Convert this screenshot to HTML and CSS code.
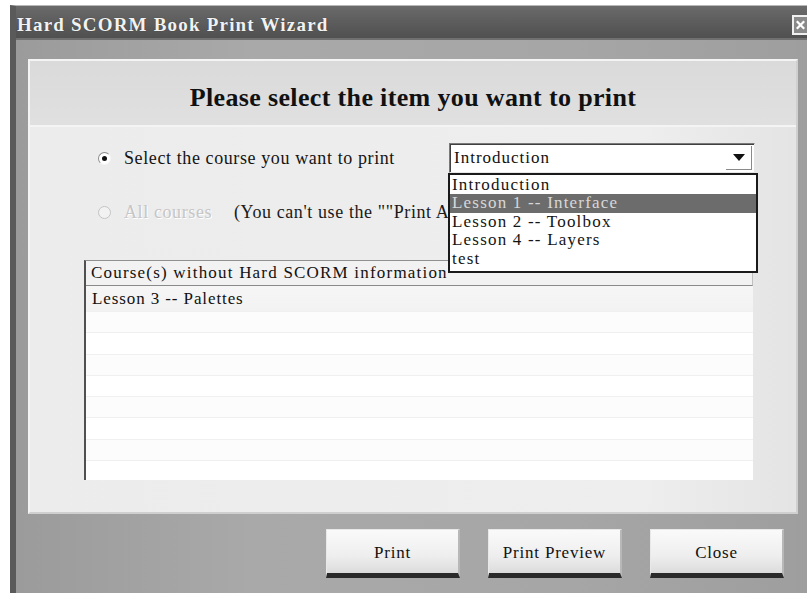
FILE: index.html
```html
<!DOCTYPE html>
<html lang="en">
<head>
<meta charset="utf-8">
<title>Hard SCORM Book Print Wizard</title>
<link rel="stylesheet" href="styles.css">
</head>
<body>
<div class="window">
  <div class="titlebar">
    <span class="title">Hard SCORM Book Print Wizard</span>
    <span class="close-btn">
      <svg width="14" height="14" viewBox="0 0 14 14"><path d="M3 3 L11 11 M11 3 L3 11" stroke="#fff" stroke-width="2.4"/></svg>
    </span>
  </div>
  <div class="client">
    <div class="panel">
      <div class="panel-head">Please select the item you want to print</div>
      <div class="panel-body">
        <div class="option-row first">
          <span class="radio checked"></span>
          <span class="opt-label">Select the course you want to print</span>
          <div class="combo">
            <span class="combo-text">Introduction</span>
            <span class="combo-btn">
              <svg width="12" height="7" viewBox="0 0 12 7"><path d="M0 0 H12 L6 7 Z" fill="#111"/></svg>
            </span>
            <ul class="dropdown">
              <li>Introduction</li>
              <li class="selected">Lesson 1 -- Interface</li>
              <li>Lesson 2 -- Toolbox</li>
              <li>Lesson 4 -- Layers</li>
              <li>test</li>
            </ul>
          </div>
        </div>
        <div class="option-row second">
          <span class="radio disabled"></span>
          <span class="opt-label muted">All courses</span>
          <span class="note">(You can't use the ""Print A</span>
        </div>
        <div class="listbox">
          <div class="list-head">Course(s) without Hard SCORM information</div>
          <div class="list-row filled">Lesson 3 -- Palettes</div>
          <div class="list-row"></div>
          <div class="list-row"></div>
          <div class="list-row"></div>
          <div class="list-row"></div>
          <div class="list-row"></div>
          <div class="list-row"></div>
          <div class="list-row"></div>
          <div class="list-row last"></div>
        </div>
      </div>
    </div>
    <div class="buttons">
      <button class="btn">Print</button>
      <button class="btn">Print Preview</button>
      <button class="btn">Close</button>
    </div>
  </div>
</div>
</body>
</html>
```
FILE: styles.css
```css
* { box-sizing: border-box; }

html, body {
  margin: 0;
  padding: 0;
  background: #ffffff;
  width: 807px;
  height: 593px;
  overflow: hidden;
  font-family: "Liberation Serif", "Times New Roman", serif;
}

.window {
  margin: 5px 0 0 10px;
  width: 797px;
  height: 588px;
  display: flex;
  flex-direction: column;
  background: #9a9a9a;
  border-left: 6px solid #5a5a5a;
  border-top: 1px solid #b8b8b8;
}

.titlebar {
  height: 34px;
  flex: 0 0 34px;
  display: flex;
  align-items: center;
  justify-content: space-between;
  background: linear-gradient(#6a6a6a, #5a5a5a 60%, #505050);
  border-bottom: 2px solid #707070;
  padding: 5px 0 0 1px;
}

.title {
  color: #f2f2f2;
  font-weight: bold;
  font-size: 19px;
  letter-spacing: 1.2px;
  text-shadow: 0 0 1px #333;
}

.close-btn {
  width: 15px;
  height: 20px;
  border: 2px solid #f0f0f0;
  border-right: none;
  background: #8a8a8a;
  display: flex;
  align-items: center;
  justify-content: center;
}

.client {
  flex: 1;
  display: flex;
  flex-direction: column;
  background: linear-gradient(90deg, #9b9b9b, #a9a9a9 30%, #a6a6a6 70%, #9e9e9e);
  padding: 19px 9px 0 12px;
}

.panel {
  height: 455px;
  flex: 0 0 455px;
  background: #e8e8e8;
  border: 2px solid #f4f4f4;
  border-right-color: #cfcfcf;
  border-bottom-color: #cfcfcf;
  display: flex;
  flex-direction: column;
}

.panel-head {
  height: 66px;
  flex: 0 0 66px;
  display: flex;
  align-items: center;
  justify-content: center;
  font-weight: bold;
  font-size: 26px;
  letter-spacing: 0.35px;
  color: #111;
  background: linear-gradient(#dadada, #e0e0e0);
  border-bottom: 2px solid #f4f4f4;
  padding-top: 10px;
}

.panel-body {
  flex: 1;
  position: relative;
  background: linear-gradient(90deg, #ececec, #eeeeee 80%, #e4e4e4);
  padding: 16px 0 0 56px;
}

.option-row {
  display: flex;
  align-items: center;
  height: 30px;
  font-size: 18px;
  letter-spacing: 0.6px;
  color: #141414;
}

.option-row.second {
  margin-top: 24px;
}

.radio {
  width: 13px;
  height: 13px;
  border-radius: 50%;
  background: #fff;
  border: 1px solid #8a8a8a;
  border-right-color: #f4f4f4;
  border-bottom-color: #f4f4f4;
  margin-left: 12px;
  margin-right: 13px;
  position: relative;
  flex: 0 0 13px;
}

.radio.checked::after {
  content: "";
  position: absolute;
  left: 3px;
  top: 3px;
  width: 5px;
  height: 5px;
  border-radius: 50%;
  background: #111;
}

.radio.disabled {
  background: #f2f2f2;
  border-color: #c4c4c4;
}

.opt-label {
  white-space: nowrap;
}

.option-row.first .opt-label {
  width: 325px;
  flex: 0 0 325px;
}

.opt-label.muted {
  color: #c6c6c6;
  text-shadow: 1px 1px 0 #ffffff;
  width: 110px;
  flex: 0 0 110px;
}

.note {
  white-space: nowrap;
  color: #1a1a1a;
}

.combo {
  position: relative;
  width: 306px;
  height: 30px;
  background: #fff;
  border: 1px solid #7a7a7a;
  border-right-color: #e6e6e6;
  border-bottom-color: #e6e6e6;
  box-shadow: inset 1px 1px 0 #404040;
  display: flex;
  align-items: center;
  justify-content: space-between;
  padding-left: 4px;
  margin-top: -1px;
}

.combo-text {
  font-size: 17px;
  letter-spacing: 1px;
  color: #111;
}

.combo-btn {
  width: 26px;
  height: 24px;
  margin-right: 2px;
  display: flex;
  align-items: center;
  justify-content: center;
  border-right: 1px solid #8a8a8a;
  border-bottom: 1px solid #8a8a8a;
}

.dropdown {
  position: absolute;
  left: -2px;
  top: 29px;
  width: 310px;
  margin: 0;
  padding: 1px 0 3px;
  list-style: none;
  background: #ffffff;
  border: 2px solid #1a1a1a;
  z-index: 5;
}

.dropdown li {
  height: 18.5px;
  line-height: 18px;
  font-size: 17px;
  letter-spacing: 1.2px;
  padding-left: 2px;
  color: #141414;
  white-space: nowrap;
}

.dropdown li.selected {
  background: #6c6c6c;
  color: #d8d8d8;
}

.listbox {
  margin-top: 33px;
  margin-left: -2px;
  width: 669px;
  height: 220px;
  background: #ffffff;
  border-left: 2px solid #505050;
  border-top: 1px solid #909090;
  display: flex;
  flex-direction: column;
  overflow: hidden;
}

.list-head {
  height: 25px;
  flex: 0 0 25px;
  font-size: 17px;
  letter-spacing: 1.2px;
  line-height: 24px;
  padding-left: 5px;
  color: #111;
  background: #f2f2f2;
  border-bottom: 1px solid #8a8a8a;
  border-right: 1px solid #c0c0c0;
  white-space: nowrap;
}

.list-row {
  height: 21.3px;
  flex: 0 0 21.3px;
  border-bottom: 1px solid #f0f0f0;
  font-size: 17px;
  letter-spacing: 0.9px;
  line-height: 26px;
  padding-left: 6px;
  color: #111;
  background: #ffffff;
}

.list-row:nth-child(odd) {
  background: #fcfcfc;
}

.list-row.filled {
  background: linear-gradient(#f6f6f6, #f2f2f2);
  height: 26px;
  flex-basis: 26px;
}

.buttons {
  display: flex;
  justify-content: flex-end;
  gap: 28px;
  padding: 15px 14px 0 0;
}

.btn {
  width: 134px;
  height: 49px;
  font-family: "Liberation Serif", "Times New Roman", serif;
  font-size: 17px;
  letter-spacing: 0.8px;
  color: #111;
  background: linear-gradient(#fafafa, #eeeeee 60%, #dcdcdc);
  border: 1px solid #e8e8e8;
  border-right: 2px solid #b8b8b8;
  border-bottom: 5px solid #2a2a2a;
  padding: 2px 0 0;
  cursor: default;
}
```
